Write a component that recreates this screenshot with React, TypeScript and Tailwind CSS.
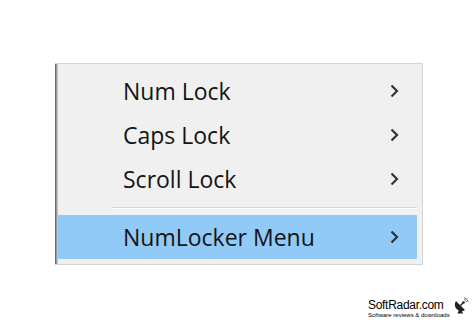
import React from 'react';

const items = ['Num Lock', 'Caps Lock', 'Scroll Lock'];

const Chevron: React.FC = () => (
  <svg width="9" height="14" viewBox="0 0 9 14" className="shrink-0">
    <polyline points="1.5,1.5 7,7 1.5,12.5" fill="none" stroke="#333" strokeWidth="2.2" />
  </svg>
);

const MenuRow: React.FC<{ label: string; active?: boolean }> = ({ label, active }) => (
  <div
    className={`h-[44px] flex items-center pl-[65px] pr-[18px] ${active ? 'bg-[#91c9f7]' : ''}`}
  >
    <span className="flex-1 text-[23px] leading-none text-[#141414] font-['Open_Sans',sans-serif]">
      {label}
    </span>
    <Chevron />
  </div>
);

const App: React.FC = () => {
  return (
    <div className="w-[474px] h-[329px] bg-white overflow-hidden flex flex-col">
      <div className="ml-[55px] mt-[63px] w-[368px] h-[202px] flex bg-[#f0f0f0] border-t border-r border-b border-[#d4d4d4]">
        {/* left shade */}
        <div className="w-[3px] bg-gradient-to-r from-[#5a5a5a] via-[#9a9a9a] to-[#d8d8d8]" />
        <div className="flex-1 flex flex-col pt-[5px] pr-[5px]">
          {items.map((label) => (
            <MenuRow key={label} label={label} />
          ))}
          <div className="h-[14px] flex flex-col justify-center pl-[54px]">
            <div className="h-px bg-[#d7d7d7]" />
            <div className="h-px bg-white" />
          </div>
          <MenuRow label="NumLocker Menu" active />
        </div>
      </div>

      <div className="mt-[35px] ml-[368px] flex items-start gap-[3px]">
        <div className="flex flex-col font-['Liberation_Sans',Arial,sans-serif] text-black">
          <span className="text-[12px] leading-[11px] tracking-[-0.3px]">SoftRadar.com</span>
          <span className="text-[6px] leading-[7px] mt-[1px]">Software reviews &amp; downloads</span>
        </div>
        <svg width="16" height="17" viewBox="0 0 16 17" className="-mt-[3px]">
          <path d="M3 4 L12 13 A6.5 6.5 0 0 1 3 4 Z" fill="#222" />
          <path d="M7.5 8.5 L10 6" stroke="#222" strokeWidth="1.4" />
          <circle cx="10.5" cy="5.5" r="1.3" fill="#222" />
          <path d="M6 13 L4.5 16.5 L10 16.5 L8.5 13 Z" fill="#222" />
          <path d="M11 2.5 A3 3 0 0 1 13.5 5" fill="none" stroke="#666" strokeWidth="0.9" />
          <path d="M11 0.8 A4.8 4.8 0 0 1 15.2 5" fill="none" stroke="#666" strokeWidth="0.9" />
        </svg>
      </div>
    </div>
  );
};

export default App;
